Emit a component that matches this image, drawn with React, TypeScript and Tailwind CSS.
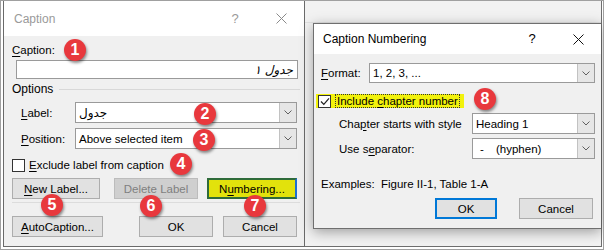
import React from 'react'

const font = { fontFamily: '"Liberation Sans", Arial, sans-serif' }

function U({ children }: { children: React.ReactNode }) {
  return <span className="underline underline-offset-2">{children}</span>
}

function XIcon({ color }: { color: string }) {
  return (
    <svg width="11" height="11" viewBox="0 0 11 11">
      <path d="M0.5 0.5 L10.5 10.5 M10.5 0.5 L0.5 10.5" stroke={color} strokeWidth="1" fill="none" />
    </svg>
  )
}

function Chevron() {
  return (
    <svg width="8" height="5" viewBox="0 0 8 5">
      <path d="M0.5 0.5 L4 4 L7.5 0.5" stroke="#606060" strokeWidth="1" fill="none" />
    </svg>
  )
}

function Combo({ w, h = 21, children }: { w: number; h?: number; children: React.ReactNode }) {
  return (
    <div
      className="flex items-stretch bg-white border border-[#9a9a9a] text-black"
      style={{ width: w, height: h }}
    >
      <div className="flex-1 flex items-center pl-[3px] min-w-0">{children}</div>
      <div className="w-[17px] bg-[#e6e6e6] border-l border-[#c2c2c2] flex items-center justify-center">
        <Chevron />
      </div>
    </div>
  )
}

function Btn({ w, children, className = '' }: { w: number; children: React.ReactNode; className?: string }) {
  return (
    <div
      className={`h-[21px] flex items-center justify-center border ${className || 'bg-[#e1e1e1] border-[#adadad] text-black'}`}
      style={{ width: w }}
    >
      {children}
    </div>
  )
}

function Badge({ n, x, y }: { n: number; x: string; y: string }) {
  return (
    <div
      className={`absolute ${x} ${y} w-[22px] h-[22px] rounded-full bg-[#e8383d] shadow-[1px_2px_3px_rgba(0,0,0,0.45)] text-white font-bold text-[16px] flex items-center justify-center leading-none`}
    >
      {n}
    </div>
  )
}

export default function App() {
  return (
    <div
      className="relative w-[604px] h-[250px] bg-white border border-[#a0a0a0] flex overflow-hidden text-[11.5px] leading-[14px]"
      style={font}
    >
      {/* Caption dialog */}
      <div className="ml-[2px] w-[302px] h-[246px] border-x border-b border-[#6a6a6a] bg-[#f0f0f0] flex flex-col shrink-0">
        <div className="h-[35px] bg-white flex items-center text-[12px] text-[#9a9a9a]">
          <span className="pl-[10px]">Caption</span>
          <div className="ml-auto w-[46px] flex justify-center text-[13px]">?</div>
          <div className="w-[46px] flex justify-center"><XIcon color="#8a8a8a" /></div>
        </div>
        <div className="pl-[8px] flex flex-col">
          <div className="mt-[7px]"><U>C</U>aption:</div>
          <div className="mt-[3px] ml-[4px] w-[282px] h-[19px] bg-white border border-[#9a9a9a] flex items-center justify-end pr-[4px]">
            <span dir="rtl" className="italic text-[12px]" style={{ fontFamily: '"DejaVu Sans", sans-serif' }}>جدول ١</span>
          </div>
          <div className="mt-[3px] flex items-center gap-[6px] pr-[4px]">
            <span className="text-[12px]">Options</span>
            <div className="flex-1 h-px bg-[#d8d8d8]" />
          </div>
          <div className="mt-[6px] flex items-center">
            <span className="ml-[9px] w-[54px]"><U>L</U>abel:</span>
            <Combo w={222}>
              <span className="text-[12px]" style={{ fontFamily: '"DejaVu Sans", sans-serif' }}>جدول</span>
            </Combo>
          </div>
          <div className="mt-[5px] flex items-center">
            <span className="ml-[9px] w-[54px]"><U>P</U>osition:</span>
            <Combo w={222}>Above selected item</Combo>
          </div>
          <div className="mt-[9px] flex items-center gap-[4px]">
            <div className="w-[13px] h-[13px] bg-white border border-[#333]" />
            <span><U>E</U>xclude label from caption</span>
          </div>
          <div className="mt-[6px] flex">
            <Btn w={88}><U>N</U>ew Label...</Btn>
            <Btn w={84} className="ml-[14px] bg-[#cfcfcf] border-[#bcbcbc] text-[#7f7f7f]">Delete Label</Btn>
            <Btn w={90} className="ml-[9px] bg-[#e2e20c] border-2 border-[#2f6b3a] border-r-[#1e6fd0] text-black">N<U>u</U>mbering...</Btn>
          </div>
          <div className="mt-[3px] mr-[4px] h-px bg-[#dcdcdc]" />
          <div className="mt-[13px] flex">
            <Btn w={91}><U>A</U>utoCaption...</Btn>
            <Btn w={74} className="ml-[36px] bg-[#e1e1e1] border-[#adadad] text-black">OK</Btn>
            <Btn w={74} className="ml-[10px] bg-[#e1e1e1] border-[#adadad] text-black">Cancel</Btn>
          </div>
        </div>
      </div>

      {/* background window behind Caption Numbering */}
      <div className="w-[297px] h-[246px] bg-[#f2f2f2] border-r border-b border-[#6f6f6f] flex flex-col shrink-0">
        <div className="h-[22px] border-b border-[#e2e2e2]" />
        <div className="ml-[8px] w-[288px] h-[206px] border border-[#6f6f6f] border-r-0 bg-[#f0f0f0] shadow-[0_3px_12px_rgba(0,0,0,0.35)] flex flex-col">
          <div className="h-[30px] bg-white flex items-center text-[12px] text-black">
            <span className="pl-[9px]">Caption Numbering</span>
            <div className="ml-auto w-[46px] flex justify-center text-[13px]">?</div>
            <div className="w-[46px] flex justify-center"><XIcon color="#111" /></div>
          </div>
          <div className="flex flex-col pl-[7px]">
            <div className="mt-[9px] flex items-center">
              <span className="w-[48px]"><U>F</U>ormat:</span>
              <Combo w={226} h={20}>1, 2, 3, ...</Combo>
            </div>
            <div className="mt-[11px] ml-[-5px] w-[148px] h-[14px] bg-[#f2f20c] flex items-center">
              <div className="ml-[2px] w-[13px] h-[13px] bg-white border border-[#333] flex items-center justify-center">
                <svg width="10" height="9" viewBox="0 0 10 9">
                  <path d="M1 4.5 L3.8 7.3 L9 1.3" stroke="#222" strokeWidth="1.2" fill="none" />
                </svg>
              </div>
              <span className="ml-[4px] px-[1px] border border-dotted border-[#333] leading-[12px]">Include <U>c</U>hapter number</span>
            </div>
            <div className="mt-[5px] flex items-center">
              <span className="ml-[18px] w-[133px]">Cha<U>p</U>ter starts with style</span>
              <Combo w={123}>Heading 1</Combo>
            </div>
            <div className="mt-[4px] flex items-center">
              <span className="ml-[18px] w-[133px]">Use s<U>e</U>parator:</span>
              <Combo w={123}>
                <span className="ml-[4px] w-[16px]">-</span>
                <span>(hyphen)</span>
              </Combo>
            </div>
            <div className="mt-[18px] flex">
              <span className="w-[60px]">Examples:</span>
              <span>Figure II-1, Table 1-A</span>
            </div>
            <div className="mt-[7px] flex">
              <Btn w={62} className="ml-[114px] bg-[#e1e1e1] border-2 border-[#0078d7] text-black">OK</Btn>
              <Btn w={74} className="ml-[22px] bg-[#e1e1e1] border-[#adadad] text-black">Cancel</Btn>
            </div>
          </div>
        </div>
      </div>

      <Badge n={1} x="left-[63px]" y="top-[38px]" />
      <Badge n={2} x="left-[193px]" y="top-[102px]" />
      <Badge n={3} x="left-[192px]" y="top-[128px]" />
      <Badge n={4} x="left-[169px]" y="top-[152px]" />
      <Badge n={5} x="left-[40px]" y="top-[193px]" />
      <Badge n={6} x="left-[139px]" y="top-[194px]" />
      <Badge n={7} x="left-[243px]" y="top-[194px]" />
      <Badge n={8} x="left-[473px]" y="top-[87px]" />
    </div>
  )
}
